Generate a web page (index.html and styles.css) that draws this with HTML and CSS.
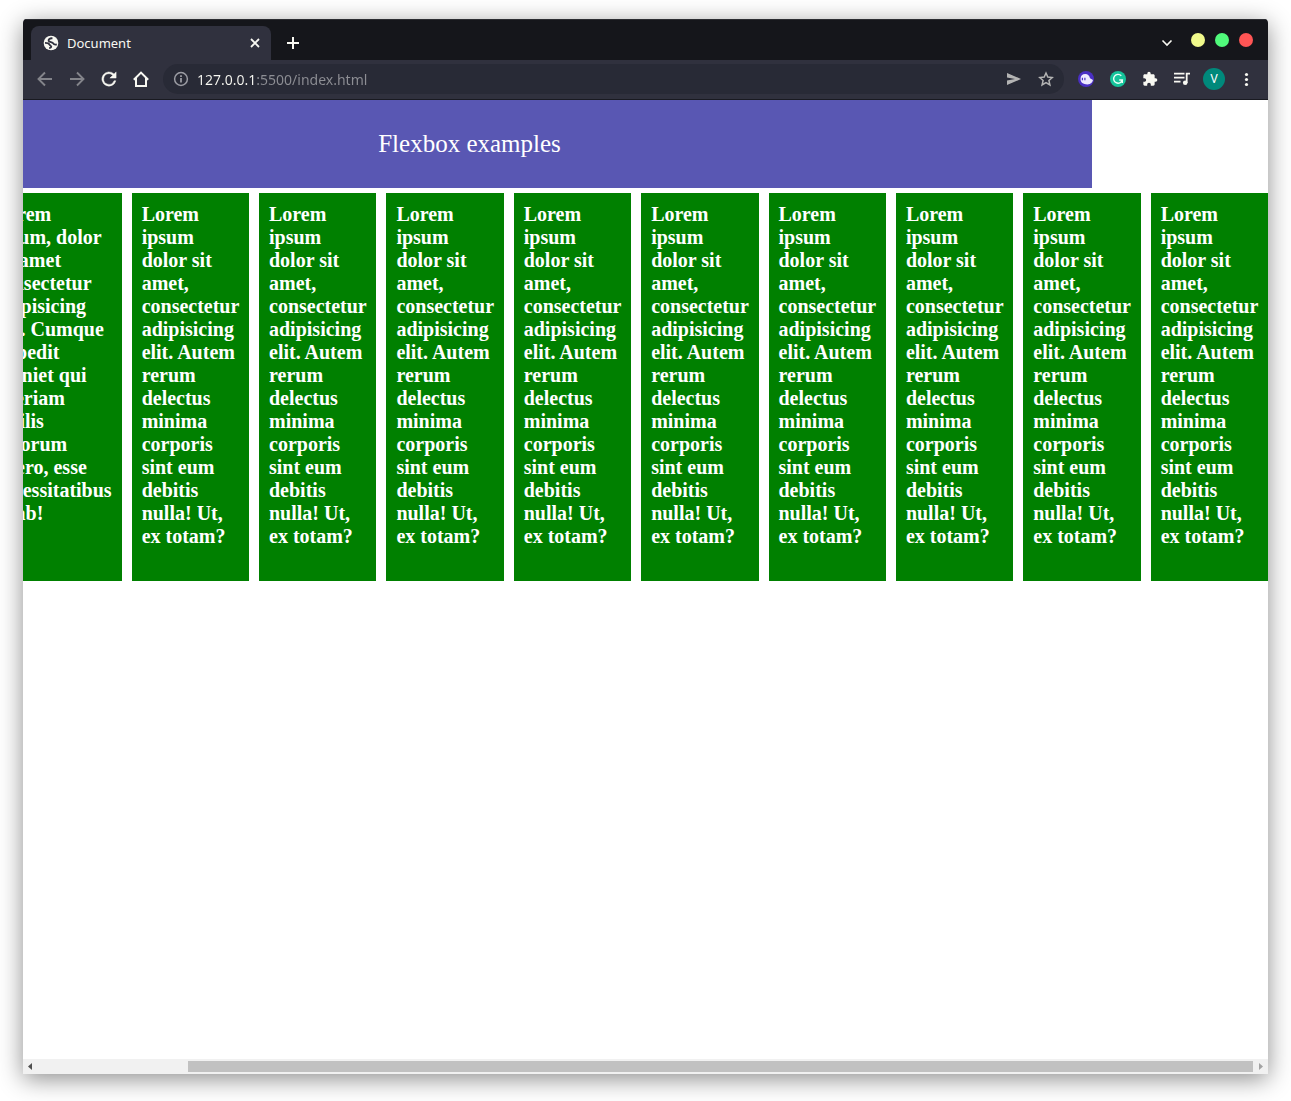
FILE: index.html
```html
<!DOCTYPE html>
<html lang="en">
<head>
<meta charset="utf-8">
<title>Document</title>
<link rel="stylesheet" href="styles.css">
</head>
<body>
<div class="window">
  <header class="tabstrip">
    <div class="tab">
      <svg class="icon favicon" viewBox="0 0 16 16"><circle cx="8" cy="8" r="7.300" fill="#f8f8f2"/><path d="M9.500 3.300C6.500 3 5.300 4.400 5.600 5.800S9.600 7 10.200 8.300 12 9.800 13.800 9.400M2 7.800C4.200 7.800 6 8.400 6.500 9.600S8.200 10.600 8.300 11.600 7 13 6.200 13.300" fill="none" stroke="#30313e" stroke-width="1.800"/></svg>
      <span class="tab-title">Document</span>
      <button class="btn tab-close" aria-label="Close tab"><svg class="icon" viewBox="0 0 16 16"><path d="M4 4l8 8M12 4l-8 8" stroke="#f8f8f2" stroke-width="1.800"/></svg></button>
    </div>
    <button class="btn new-tab" aria-label="New tab"><svg class="icon" viewBox="0 0 16 16"><path d="M8 2v12M2 8h12" stroke="#f8f8f2" stroke-width="2"/></svg></button>
    <div class="window-controls">
      <button class="btn" aria-label="Search tabs"><svg class="icon" viewBox="0 0 16 16"><path d="M3.500 8.500l4.500 4.500L12.500 8.500" fill="none" stroke="#f8f8f2" stroke-width="1.600"/></svg></button>
      <button class="dot minimize" aria-label="Minimize"></button>
      <button class="dot maximize" aria-label="Maximize"></button>
      <button class="dot close" aria-label="Close"></button>
    </div>
  </header>
  <nav class="toolbar">
    <button class="btn" aria-label="Back"><svg class="icon" viewBox="0 0 16 16"><path d="M15 8H2M8 1.500L1.500 8 8 14.500" fill="none" stroke="#83848a" stroke-width="1.900"/></svg></button>
    <button class="btn" aria-label="Forward"><svg class="icon" viewBox="0 0 16 16"><path d="M1 8h13M8 1.500L14.500 8 8 14.500" fill="none" stroke="#83848a" stroke-width="1.900"/></svg></button>
    <button class="btn" aria-label="Reload"><svg class="icon" viewBox="3 3 18 18"><path d="M17.650 6.350A8 8 0 1 0 19.730 14h-2.080A6 6 0 1 1 12 6c1.660 0 3.140.690 4.220 1.780L13 11h7V4z" fill="#f8f8f2" stroke="#f8f8f2" stroke-width=".5"/></svg></button>
    <button class="btn" aria-label="Home"><svg class="icon" viewBox="0 0 16 16"><path d="M0.800 8.800L8 1.600l7.200 7.200M3 7v8h10V7" fill="none" stroke="#f8f8f2" stroke-width="2"/></svg></button>
    <div class="omnibox">
      <svg class="icon" viewBox="0 0 16 16"><circle cx="8" cy="8" r="6.400" fill="none" stroke="#9b9ca3" stroke-width="1.500"/><path d="M8 7v4.500M8 4.200v1.700" stroke="#9b9ca3" stroke-width="1.800"/></svg>
      <input class="address" type="text" aria-label="Address" value="127.0.0.1:5500/index.html">
      <button class="btn" aria-label="Share"><svg class="icon" viewBox="0 0 16 16"><path d="M1 2l14 6-14 6V9.500L9 8 1 6.500z" fill="#b4b4b4"/></svg></button>
      <button class="btn" aria-label="Bookmark"><svg class="icon" viewBox="0 0 16 16"><path d="M8 2l1.800 4.100 4.400.400-3.300 3 1 4.400L8 11.600l-3.900 2.300 1-4.400-3.300-3 4.400-.400z" fill="none" stroke="#b4b4b4" stroke-width="1.500"/></svg></button>
    </div>
    <div class="extensions">
      <button class="btn" aria-label="Ghost extension"><svg class="icon" viewBox="0 0 16 16"><circle cx="8" cy="8" r="8" fill="#4a2fc4"/><path d="M2.500 8C2.500 4.800 4.500 3 7.200 3s4.300 1.700 4.800 4.200L15 9c-.300 2.200-2.200 4.400-5.500 4.400-4.500 0-7-1.900-7-5.400z" fill="#eeeaff"/><path d="M4.400 6.700v2.500M6.900 6.700v2.500" stroke="#4a2fc4" stroke-width="1.200"/></svg></button>
      <button class="btn" aria-label="Grammar extension"><svg class="icon" viewBox="0 0 16 16"><circle cx="8" cy="8" r="8" fill="#15c39a"/><path d="M11.300 4.800A4.400 4.400 0 1 0 12.300 9H9.200M12.300 8.500V12" fill="none" stroke="#e9fff8" stroke-width="1.400"/></svg></button>
      <button class="btn" aria-label="Extensions"><svg class="icon" viewBox="0 0 24 24"><path d="M20.500 11H19V7c0-1.100-.900-2-2-2h-4V3.500a2.500 2.500 0 0 0-5 0V5H4c-1.100 0-1.990.900-1.990 2v3.800H3.500c1.490 0 2.700 1.210 2.700 2.700s-1.210 2.700-2.700 2.700H2V20c0 1.100.900 2 2 2h3.800v-1.500c0-1.490 1.210-2.700 2.700-2.700s2.700 1.210 2.700 2.700V22H17c1.100 0 2-.900 2-2v-4h1.500a2.500 2.500 0 0 0 0-5z" fill="#f8f8f2"/></svg></button>
      <button class="btn" aria-label="Media"><svg class="icon" viewBox="0 0 16 16"><path d="M0 2.700h10.500M0 6.700h10.500M0 10.700h6.500M12.700 12V2.700H16" fill="none" stroke="#f8f8f2" stroke-width="1.800"/><circle cx="11.200" cy="11.800" r="2.300" fill="#f8f8f2"/></svg></button>
      <button class="avatar" aria-label="Profile">V</button>
      <button class="btn" aria-label="Menu"><svg class="icon" viewBox="0 0 16 16"><g fill="#f8f8f2"><circle cx="8.500" cy="3.500" r="1.600"/><circle cx="8.500" cy="8.500" r="1.600"/><circle cx="8.500" cy="13.500" r="1.600"/></g></svg></button>
    </div>
  </nav>
  <main class="viewport">
    <div class="banner">Flexbox examples</div>
    <div class="row">
      <div class="item">Lorem ipsum, dolor sit amet consectetur adipisicing elit. Cumque impedit eveniet qui aperiam facilis laborum libero, esse necessitatibus id ab!</div>
      <div class="item">Lorem ipsum dolor sit amet, consectetur adipisicing elit. Autem rerum delectus minima corporis sint eum debitis nulla! Ut, ex totam?</div>
      <div class="item">Lorem ipsum dolor sit amet, consectetur adipisicing elit. Autem rerum delectus minima corporis sint eum debitis nulla! Ut, ex totam?</div>
      <div class="item">Lorem ipsum dolor sit amet, consectetur adipisicing elit. Autem rerum delectus minima corporis sint eum debitis nulla! Ut, ex totam?</div>
      <div class="item">Lorem ipsum dolor sit amet, consectetur adipisicing elit. Autem rerum delectus minima corporis sint eum debitis nulla! Ut, ex totam?</div>
      <div class="item">Lorem ipsum dolor sit amet, consectetur adipisicing elit. Autem rerum delectus minima corporis sint eum debitis nulla! Ut, ex totam?</div>
      <div class="item">Lorem ipsum dolor sit amet, consectetur adipisicing elit. Autem rerum delectus minima corporis sint eum debitis nulla! Ut, ex totam?</div>
      <div class="item">Lorem ipsum dolor sit amet, consectetur adipisicing elit. Autem rerum delectus minima corporis sint eum debitis nulla! Ut, ex totam?</div>
      <div class="item">Lorem ipsum dolor sit amet, consectetur adipisicing elit. Autem rerum delectus minima corporis sint eum debitis nulla! Ut, ex totam?</div>
      <div class="item">Lorem ipsum dolor sit amet, consectetur adipisicing elit. Autem rerum delectus minima corporis sint eum debitis nulla! Ut, ex totam?</div>
    </div>
  </main>
  <div class="scrollbar">
    <button class="scroll-arrow" aria-label="Scroll left"><svg viewBox="0 0 15 15"><path d="M9 4v7L5 7.500z" fill="#505050"/></svg></button>
    <div class="thumb"></div>
    <button class="scroll-arrow" aria-label="Scroll right"><svg viewBox="0 0 15 15"><path d="M6 4v7l4-3.500z" fill="#a3a3a3"/></svg></button>
  </div>
</div>
</body>
</html>
```
FILE: styles.css
```css
* {
  box-sizing: border-box;
}

body {
  margin: 0;
  padding: 19px 23px 27px;
  min-height: 100vh;
  display: flex;
  background: #fff;
  font-family: "Noto Sans", sans-serif;
}

button {
  padding: 0;
  border: 0;
  background: none;
}

.window {
  flex: 1;
  min-width: 0;
  display: flex;
  flex-direction: column;
  overflow: hidden;
  border-radius: 4px 4px 0 0;
  background: #fff;
  box-shadow: 0 5px 24px rgba(0, 0, 0, 0.45);
}

.icon {
  display: block;
  width: 16px;
  height: 16px;
  flex: none;
}

.btn {
  flex: none;
}

.tabstrip {
  display: flex;
  align-items: center;
  height: 41px;
  padding: 7px 15px 0 8px;
  background: #15161b;
  box-shadow: inset 0 1px #2c2d32;
}

.tab {
  display: flex;
  align-items: center;
  gap: 8px;
  width: 240px;
  height: 34px;
  padding: 0 8px 0 12px;
  border-radius: 8px 8px 0 0;
  background: #30313e;
  color: #f8f8f2;
  font-size: 13px;
}

.tab-title {
  flex: 1;
}

.new-tab {
  margin-left: 14px;
}

.window-controls {
  display: flex;
  align-items: center;
  gap: 10px;
  margin: -6px 0 0 auto;
}

.window-controls .btn {
  margin-right: 6px;
}

.dot {
  width: 14px;
  height: 14px;
  border-radius: 50%;
}

.minimize {
  background: #f1fa8c;
}

.maximize {
  background: #50fa7b;
}

.close {
  background: #ff5555;
}

.toolbar {
  display: flex;
  align-items: center;
  gap: 16px;
  height: 40px;
  padding: 0 14px 1px;
  background: #30313e;
  border-bottom: 1px solid #191a21;
}

.omnibox {
  flex: 1;
  min-width: 0;
  display: flex;
  align-items: center;
  gap: 8px;
  height: 30px;
  margin-left: -2px;
  padding: 0 10px;
  border-radius: 16px;
  background: #282a36;
}

.omnibox .btn {
  margin-left: 8px;
}

.address {
  flex: 1;
  min-width: 0;
  padding: 0;
  border: 0;
  font: 14px "Noto Sans", sans-serif;
  color: #f8f8f2;
  background: linear-gradient(to right, #f8f8f2 60px, #8d8e94 60px);
  background-clip: text;
  -webkit-background-clip: text;
  -webkit-text-fill-color: transparent;
}

.extensions {
  display: flex;
  align-items: center;
  gap: 16px;
  margin-left: -2px;
}

.avatar {
  width: 22px;
  height: 22px;
  margin: 0 -3px;
  border-radius: 50%;
  background: #00897b;
  color: #fff;
  font: 12px Roboto, sans-serif;
}

.viewport {
  flex: 1;
  overflow: hidden;
  font-family: "Liberation Serif", serif;
}

.banner {
  margin-left: -176px;
  width: 100%;
  padding: 30px;
  background: #5957b3;
  color: #fff;
  font-size: 25px;
  line-height: 28px;
  text-align: center;
}

.row {
  display: flex;
  justify-content: flex-end;
  gap: 10px;
  margin-top: 5px;
}

.item {
  flex: none;
  width: min-content;
  min-height: 388px;
  padding: 10px;
  background: #008000;
  color: #fff;
  font-size: 20px;
  font-weight: bold;
  line-height: 23px;
}

.scrollbar {
  display: flex;
  align-items: center;
  height: 15px;
  background: #f1f1f1;
}

.scroll-arrow,
.scroll-arrow svg {
  display: block;
  width: 15px;
  height: 15px;
}

.thumb {
  flex: 1;
  height: 11px;
  margin-left: 150px;
  background: #c1c1c1;
}
```
